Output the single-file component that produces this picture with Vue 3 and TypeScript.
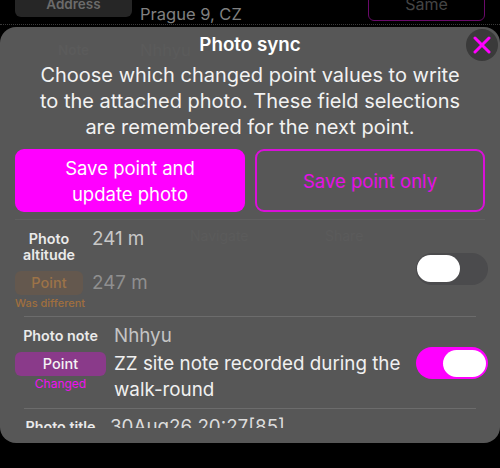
<script setup lang="ts">
interface Row {
  label: string
  photo: string
  point: string
  status: string
  on: boolean
}
const rows: Row[] = [
  { label: 'Photo altitude', photo: '241 m', point: '247 m', status: 'Was different', on: false },
  { label: 'Photo note', photo: 'Nhhyu', point: 'ZZ site note recorded during the walk-round', status: 'Changed', on: true },
]
</script>

<template>
  <div class="screen">
    <div class="behind">
      <div class="b-chip">Address</div>
      <div class="b-val">Prague 9, CZ</div>
      <div class="b-same">Same</div>
    </div>
    <section class="sheet">
      <span class="ghost g1">Note</span>
      <span class="ghost g2">Nhhyu</span>
      <span class="ghost g3">Navigate</span>
      <span class="ghost g4">Share</span>
      <header class="head">
        <h1>Photo sync</h1>
        <button class="close" aria-label="Close">
          <svg width="18" height="18" viewBox="0 0 18 18">
            <path d="M2 2 L16 16 M16 2 L2 16" stroke="#ff00ff" stroke-width="3" stroke-linecap="round" />
          </svg>
        </button>
      </header>
      <p class="intro">Choose which changed point values to write to the attached photo. These field selections are remembered for the next point.</p>
      <div class="actions">
        <button class="btn primary">Save point and<br />update photo</button>
        <button class="btn outline">Save point only</button>
      </div>
      <div class="list">
        <div class="row" :class="{ off: !r.on, on: r.on }" v-for="r in rows" :key="r.label">
          <div class="cols">
            <div class="line">
              <div class="label">{{ r.label }}</div>
              <div class="val photo">{{ r.photo }}</div>
            </div>
            <div class="line second">
              <div class="pointcol">
                <div class="chip">Point</div>
                <div class="status">{{ r.status }}</div>
              </div>
              <div class="val point">{{ r.point }}</div>
            </div>
          </div>
          <div class="toggle"><span class="knob"></span></div>
        </div>
        <div class="row clipped">
          <div class="label">Photo title</div>
          <div class="val">30Aug26 20:27[85]</div>
        </div>
      </div>
    </section>
  </div>
</template>

<style>
html, body { margin: 0; background: #000; }
</style>

<style scoped>
.screen {
  width: 500px;
  height: 468px;
  overflow: hidden;
  background: #000;
  font-family: Inter, "Liberation Sans", sans-serif;
  color: #fff;
}
.behind {
  height: 25px;
  box-sizing: border-box;
  padding: 0 15px;
  display: flex;
  align-items: flex-end;
  gap: 8px;
  border-bottom: 1px dotted #3a3a3a;
  overflow: hidden;
  margin-bottom: 2px;
}
.b-chip {
  width: 117px;
  height: 24px;
  margin-bottom: 7px;
  flex: none;
  background: #262626;
  border-radius: 6px;
  color: #6b6b6b;
  font-size: 13.5px;
  font-weight: 600;
  text-align: center;
  line-height: 22px;
}
.b-val {
  flex: 1;
  font-size: 16.5px;
  color: #808080;
  line-height: 22px;
  margin-bottom: -1px;
}
.b-same {
  width: 117px;
  height: 30px;
  margin-bottom: 3px;
  flex: none;
  box-sizing: border-box;
  border: 1px solid #6a0a6a;
  border-radius: 6px;
  color: #454545;
  font-size: 16px;
  text-align: center;
  line-height: 24px;
}
.sheet {
  height: 416px;
  box-sizing: border-box;
  background: #575757;
  border-radius: 16px;
  padding: 0 15px 15px;
  display: flex;
  flex-direction: column;
  overflow: hidden;
  position: relative;
}
.ghost {
  position: absolute;
  color: #5b5b5b;
  font-size: 16.5px;
  line-height: 20px;
}
.g1 { left: 58px; top: 13px; font-size: 13.5px; font-weight: 600; }
.g2 { left: 140px; top: 13px; }
.g3 { left: 190px; top: 199px; font-size: 14px; }
.g4 { left: 325px; top: 199px; font-size: 14px; }
.head {
  height: 35px;
  display: flex;
  align-items: center;
  justify-content: center;
  position: relative;
  flex: none;
}
h1 {
  margin: 0;
  font-size: 18.8px;
  font-weight: 600;
}
.close {
  position: absolute;
  right: -13px;
  top: 2px;
  width: 32px;
  height: 32px;
  padding: 0;
  border: 0;
  border-radius: 50%;
  background: #3a3a3a;
  display: flex;
  align-items: center;
  justify-content: center;
}
.intro {
  margin: 0;
  padding: 0 15px;
  font-size: 20px;
  line-height: 26px;
  text-align: center;
  color: #f2f2f2;
  flex: none;
  position: relative;
}
.actions {
  display: grid;
  grid-template-columns: 1fr 1fr;
  gap: 10px;
  margin-top: 9px;
  padding-bottom: 7px;
  border-bottom: 1px solid #5f5f5f;
  flex: none;
  position: relative;
}
.btn {
  height: 63px;
  border-radius: 9px;
  font: inherit;
  font-size: 18.5px;
  line-height: 26px;
  padding: 0;
}
.primary {
  background: #ff00ff;
  border: 0;
  color: #fff;
}
.outline {
  background: transparent;
  border: 2px solid #d910d9;
  color: #e60fe6;
}
.list {
  flex: 1;
  min-height: 0;
  overflow: hidden;
  margin-right: -3px;
  position: relative;
}
.row {
  display: flex;
  align-items: center;
  position: relative;
}
.row.off { height: 97px; }
.row.on { height: 92px; }
.row.off::after, .row.on::after {
  content: "";
  position: absolute;
  left: 9px;
  right: 12px;
  bottom: 0;
  height: 1px;
  background: #6c6c6c;
}
.cols {
  flex: 1;
  min-width: 0;
  align-self: flex-start;
}
.line {
  display: flex;
  align-items: flex-start;
}
.label {
  font-size: 14.3px;
  font-weight: 600;
  line-height: 16px;
  text-align: center;
  color: #eaeaea;
}
.val {
  font-size: 18.8px;
  line-height: 26px;
  color: #d0d0d0;
}
.chip {
  height: 24px;
  border-radius: 6px;
  font-size: 14.5px;
  font-weight: 500;
  line-height: 24px;
  text-align: center;
}
.status {
  font-size: 12px;
  font-weight: 500;
  line-height: 16px;
  text-align: center;
  white-space: nowrap;
}
.off .cols { padding-top: 11px; }
.off .label { width: 68px; flex: none; }
.off .photo { margin-left: 9px; line-height: 16px; color: #c8c8c8; }
.off .second { margin-top: 8px; }
.off .pointcol { width: 68px; flex: none; }
.off .chip { background: #64584e; color: #9c7348; }
.off .status { color: #a06f3e; font-size: 11px; }
.off .point { margin-left: 9px; color: #8f8f8f; line-height: 24px; }

.on .cols { padding-top: 6px; }
.on .label { width: 91px; flex: none; line-height: 26px; }
.on .photo { margin-left: 8px; color: #c4c4c4; }
.on .second { margin-top: 3px; }
.on .pointcol { width: 91px; flex: none; }
.on .chip { background: #8a3a8a; color: #f3f3f3; }
.on .status { color: #f010f0; font-weight: 400; }
.on .point { margin-left: 8px; margin-top: -1px; color: #f0f0f0; flex: 1; }

.toggle {
  width: 72px;
  height: 32px;
  flex: none;
  border-radius: 16px;
  display: flex;
  align-items: center;
  padding: 0 2px;
  box-sizing: border-box;
}
.off .toggle { background: #4b4b4d; padding-left: 1px; }
.on .toggle { background: #ff00ff; justify-content: flex-end; }
.knob {
  width: 43px;
  height: 27px;
  border-radius: 14px;
  background: #fff;
}
.clipped {
  padding-top: 5px;
  gap: 4px;
  align-items: flex-start;
}
.clipped .label {
  width: 91px;
  flex: none;
  line-height: 26px;
}
.clipped .val {
  color: #dcdcdc;
}
</style>
